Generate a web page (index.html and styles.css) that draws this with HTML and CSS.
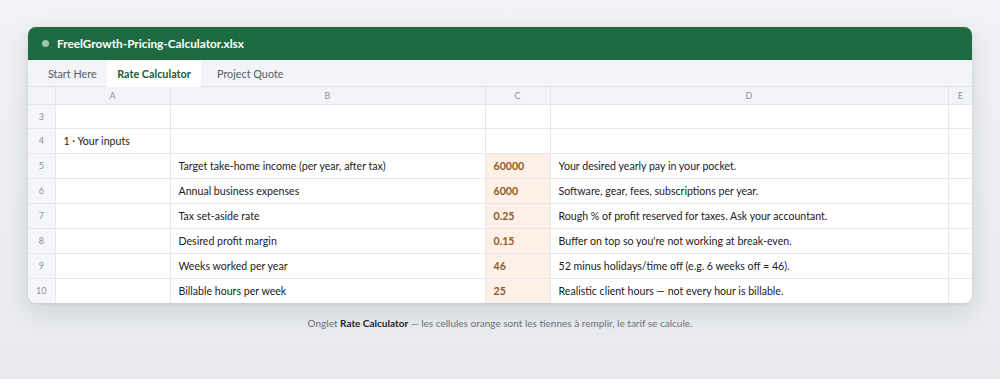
FILE: index.html
```html
<!DOCTYPE html>
<html lang="fr">
<head>
  <meta charset="UTF-8">
  <title>FreelGrowth-Pricing-Calculator.xlsx</title>
  <link rel="stylesheet" href="styles.css">
</head>
<body>
  <div class="book">
    <div class="book-title">
      <span class="dot"></span>
      FreelGrowth-Pricing-Calculator.xlsx
    </div>
    <div class="tabs">
      <div class="tab tab-first">Start Here</div>
      <div class="tab tab-active">Rate Calculator</div>
      <div class="tab">Project Quote</div>
    </div>
    <table class="sheet">
      <colgroup>
        <col class="c-num">
        <col class="c-a">
        <col class="c-b">
        <col class="c-c">
        <col class="c-d">
        <col class="c-e">
      </colgroup>
      <thead>
        <tr>
          <th></th><th>A</th><th>B</th><th>C</th><th>D</th><th>E</th>
        </tr>
      </thead>
      <tbody>
        <tr class="row-short">
          <td class="num">3</td><td></td><td></td><td></td><td></td><td></td>
        </tr>
        <tr>
          <td class="num">4</td><td>1 · Your inputs</td><td></td><td></td><td></td><td></td>
        </tr>
        <tr>
          <td class="num">5</td><td></td><td>Target take-home income (per year, after tax)</td>
          <td class="input">60000</td><td>Your desired yearly pay in your pocket.</td><td></td>
        </tr>
        <tr>
          <td class="num">6</td><td></td><td>Annual business expenses</td>
          <td class="input">6000</td><td>Software, gear, fees, subscriptions per year.</td><td></td>
        </tr>
        <tr>
          <td class="num">7</td><td></td><td>Tax set-aside rate</td>
          <td class="input">0.25</td><td>Rough % of profit reserved for taxes. Ask your accountant.</td><td></td>
        </tr>
        <tr>
          <td class="num">8</td><td></td><td>Desired profit margin</td>
          <td class="input">0.15</td><td>Buffer on top so you're not working at break-even.</td><td></td>
        </tr>
        <tr>
          <td class="num">9</td><td></td><td>Weeks worked per year</td>
          <td class="input">46</td><td>52 minus holidays/time off (e.g. 6 weeks off = 46).</td><td></td>
        </tr>
        <tr>
          <td class="num">10</td><td></td><td>Billable hours per week</td>
          <td class="input">25</td><td>Realistic client hours — not every hour is billable.</td><td></td>
        </tr>
      </tbody>
    </table>
  </div>
  <p class="caption">Onglet <b>Rate Calculator</b> — les cellules orange sont les tiennes à remplir, le tarif se calcule.</p>
</body>
</html>
```

FILE: styles.css
```css
*,
*::before,
*::after {
  margin: 0;
  padding: 0;
  box-sizing: border-box;
}
body {
  padding: 27px 28px 0;
  background: linear-gradient(180deg, #f1f2f5 0%, #e8eaee 100%);
  min-height: 379px;
  font-family: Lato, "Noto Sans", sans-serif;
  color: #1c2026;
}
.book {
  background: #fff;
  border-radius: 8px;
  overflow: hidden;
  box-shadow: 0 8px 24px rgba(30, 40, 60, 0.14), 0 1px 3px rgba(30, 40, 60, 0.08);
}
.book-title {
  display: flex;
  align-items: center;
  height: 33px;
  padding-left: 14px;
  background: #1e6b41;
  color: #fff;
  font-size: 11.8px;
  font-weight: 700;
}
.dot {
  width: 7px;
  height: 7px;
  border-radius: 50%;
  background: #9cc5ac;
  margin-right: 8px;
}
.tabs {
  display: flex;
  height: 27px;
  background: #f3f4f8;
  border-bottom: 1px solid #dde1e7;
}
.tab {
  display: flex;
  align-items: center;
  padding: 0 16px;
  font-size: 10.8px;
  color: #555b63;
  white-space: nowrap;
}
.tab-first {
  width: 79px;
  padding-left: 20px;
}
.tab-active {
  width: 94px;
  justify-content: center;
  padding: 0;
  background: #fff;
  color: #1e5a34;
  font-weight: 700;
  margin-bottom: -1px;
}
.sheet {
  width: 100%;
  table-layout: fixed;
  border-collapse: collapse;
  font-size: 10.6px;
}
.c-num { width: 27px; }
.c-a { width: 115px; }
.c-b { width: 315px; }
.c-c { width: 65px; }
.c-d { width: 398px; }
.c-e { width: 24px; }
.sheet th {
  height: 17px;
  background: #f3f4f8;
  border: 1px solid #e3e6eb;
  border-top: 0;
  font-size: 9px;
  font-weight: 400;
  color: #8a9099;
}
.sheet td {
  height: 25px;
  padding: 0 8px;
  border: 1px solid #e6e8ec;
  white-space: nowrap;
}
.sheet tr > :first-child {
  border-left: 0;
}
.sheet tr > :last-child {
  border-right: 0;
}
.sheet tbody tr:last-child td {
  border-bottom: 0;
}
.sheet .row-short td {
  height: 24px;
}
.sheet td.num {
  padding: 0;
  background: #f5f6f9;
  text-align: center;
  font-size: 9px;
  color: #8a9099;
}
.sheet td.input {
  background: #fdf0e6;
  color: #94581f;
  font-weight: 700;
}
.caption {
  margin-top: 14px;
  text-align: center;
  font-size: 10px;
  color: #6b717a;
}
.caption b {
  color: #1f2328;
}
```
